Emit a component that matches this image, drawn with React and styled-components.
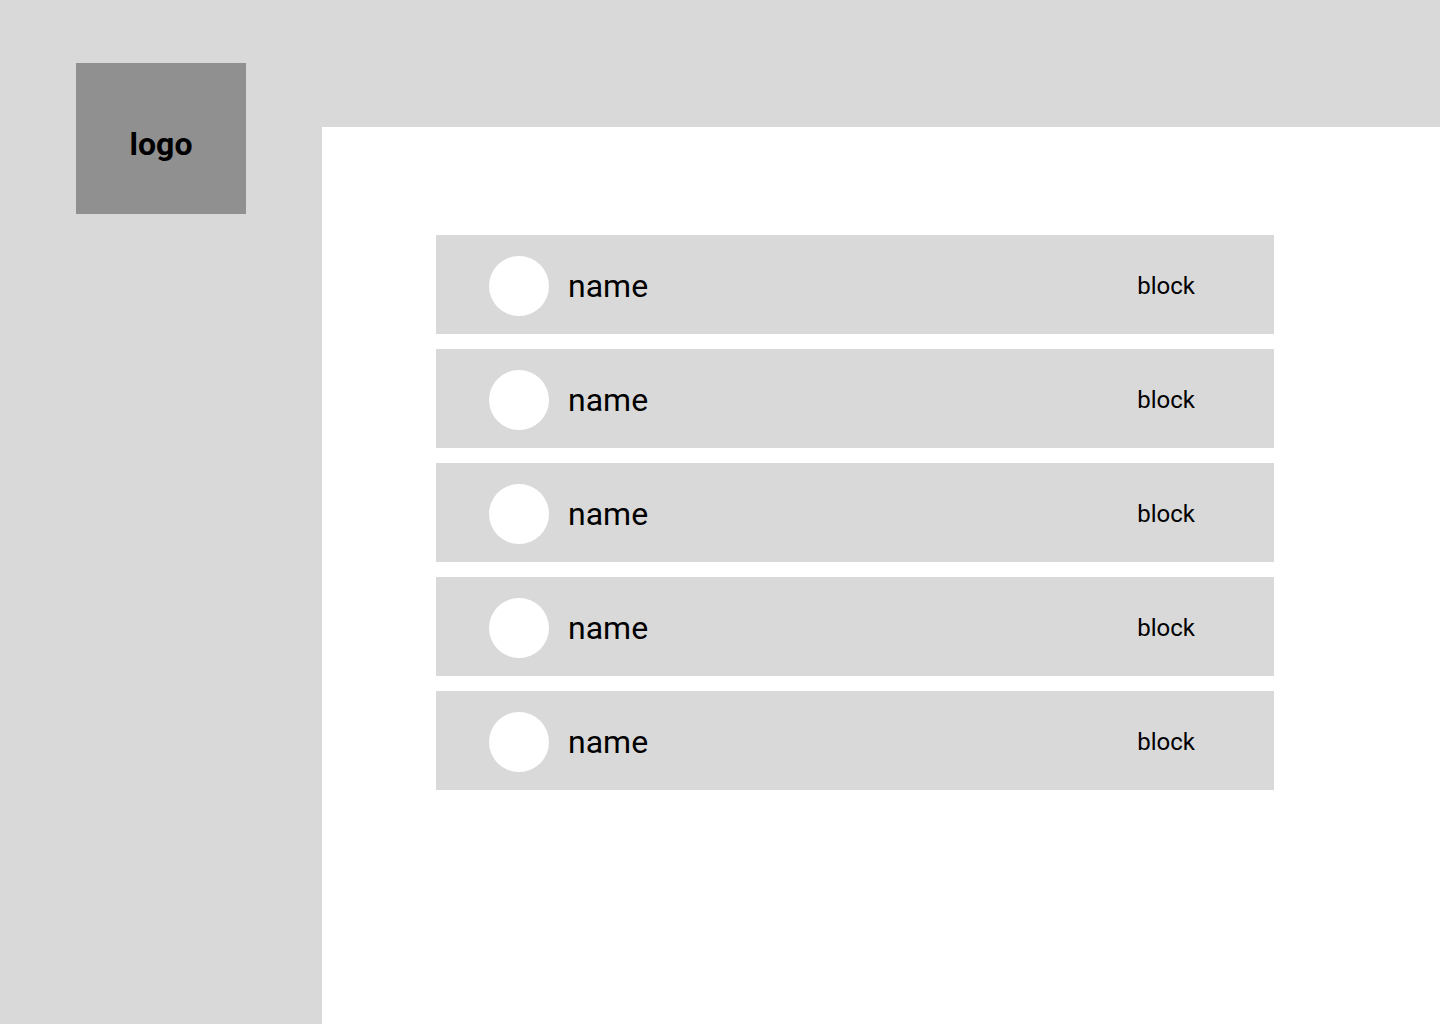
import React from "react";
import styled, { createGlobalStyle } from "styled-components";

const GlobalStyle = createGlobalStyle`
  *, *::before, *::after {
    box-sizing: border-box;
  }

  body {
    margin: 0;
    background: #ffffff;
    color: #000000;
    font-family: Roboto, "Liberation Sans", sans-serif;
  }
`;

const Page = styled.div`
  display: grid;
  grid-template-columns: 322px minmax(0, 1fr);
  grid-template-rows: 127px 1fr;
  min-height: 100vh;
`;

const Sidebar = styled.aside`
  grid-row: 1 / -1;
  padding: 63px 76px;
  background: #d9d9d9;
`;

const Logo = styled.div`
  display: flex;
  align-items: center;
  justify-content: center;
  height: 151px;
  padding-top: 10px;
  background: #909090;
  font-size: 32px;
  font-weight: 700;
  line-height: 38px;
`;

const Header = styled.header`
  background: #d9d9d9;
`;

const Main = styled.main`
  padding: 108px 166px 108px 114px;
`;

const UserList = styled.ul`
  display: flex;
  flex-direction: column;
  gap: 15px;
  margin: 0;
  padding: 0;
  list-style: none;
`;

const UserRow = styled.li`
  display: flex;
  align-items: center;
  gap: 19px;
  height: 99px;
  padding: 3px 79px 0 53px;
  background: #d9d9d9;
`;

const Avatar = styled.span`
  flex: none;
  width: 60px;
  height: 60px;
  border-radius: 50%;
  background: #ffffff;
`;

const Name = styled.span`
  flex: 1;
  font-size: 32px;
  line-height: 38px;
`;

const BlockButton = styled.button`
  padding: 0;
  border: 0;
  background: none;
  color: inherit;
  font-family: inherit;
  font-size: 24px;
  line-height: 28px;
  cursor: pointer;
`;

const users = [1, 2, 3, 4, 5].map((id) => ({ id, name: "name" }));

export default function App() {
  return (
    <>
      <GlobalStyle />
      <Page>
        <Sidebar>
          <Logo>logo</Logo>
        </Sidebar>
        <Header />
        <Main>
          <UserList>
            {users.map((user) => (
              <UserRow key={user.id}>
                <Avatar />
                <Name>{user.name}</Name>
                <BlockButton type="button">block</BlockButton>
              </UserRow>
            ))}
          </UserList>
        </Main>
      </Page>
    </>
  );
}
